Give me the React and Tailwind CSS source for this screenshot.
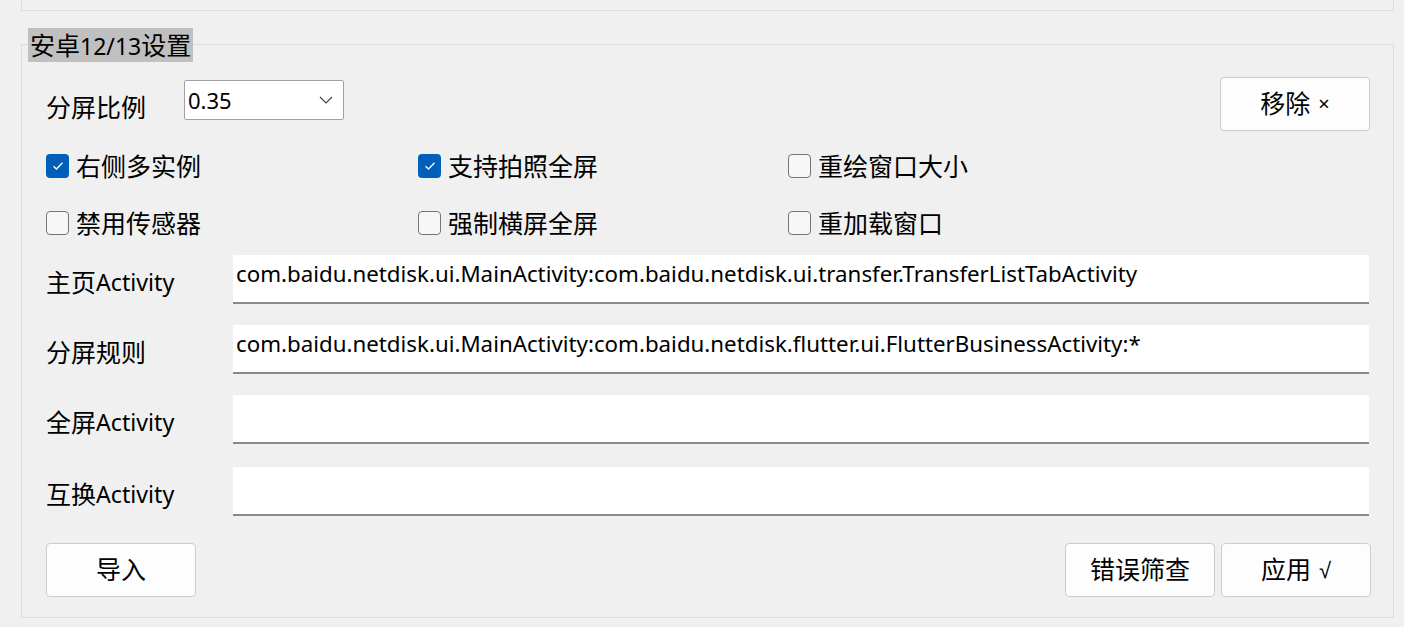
import React from "react";

const F = { fontFamily: '"Noto Sans", "Noto Sans CJK SC", sans-serif' };

function Box({ checked, label }) {
  return (
    <div className="flex items-center h-[30px]">
      {checked ? (
        <div className="w-[23px] h-[24px] rounded-[4px] bg-[#005fb8] flex items-center justify-center">
          <svg width="12" height="10" viewBox="0 0 12 10" fill="none">
            <path d="M1.5 5.2 L4.5 8 L10.5 1.8" stroke="white" strokeWidth="1.3" />
          </svg>
        </div>
      ) : (
        <div className="w-[23px] h-[24px] rounded-[4px] border border-[#767676] bg-[#f7f7f7]" />
      )}
      <span className="ml-[7px] text-[25px] leading-[30px] text-black">{label}</span>
    </div>
  );
}

function Btn({ children, className = "" }) {
  return (
    <div
      className={
        "w-[150px] h-[54px] rounded-[4px] border border-[#cccccc] bg-[#fdfdfd] flex items-center justify-center text-[25px] text-black " +
        className
      }
    >
      {children}
    </div>
  );
}

function Row({ cjk, latin, value, mt }) {
  return (
    <div className={"flex items-stretch h-[49px] " + mt}>
      <div className="w-[187px] flex items-center pt-[4px] leading-[30px] text-black">
        <span className="text-[25px]">{cjk}</span>
        {latin ? <span className="text-[23.2px]">{latin}</span> : null}
      </div>
      <div className="flex-1 bg-white border-b-2 border-[#8a8a8a] pl-[3px] pt-[4px] text-[22.3px] leading-[30px] text-black whitespace-nowrap overflow-hidden">
        {value}
      </div>
    </div>
  );
}

export default function App() {
  return (
    <div className="w-[1404px] h-[627px] bg-[#f0f0f0] overflow-hidden" style={F}>
      <div className="ml-[21px] w-[1373px] h-[11px] border-l border-r border-b border-[#dcdcdc]" />
      <div className="relative ml-[21px] mt-[33px] w-[1373px] h-[574px] border border-[#dcdcdc]">
        <div className="absolute left-[6px] top-[-17px] h-[34px] px-[2px] bg-[#c0c0c0] leading-[34px] text-black whitespace-nowrap">
          <span className="text-[25px]">安卓</span>
          <span className="text-[23px]">12/13</span>
          <span className="text-[25px]">设置</span>
        </div>
        <div className="px-[24px]">
          <div className="flex items-start justify-between mt-[32px] h-[53px]">
            <div className="flex items-start">
              <div className="w-[138px] mt-[15px] text-[25px] leading-[30px] text-black">分屏比例</div>
              <div className="mt-[3px] w-[160px] h-[40px] border border-[#a0a0a0] rounded-[2px] bg-white flex items-center justify-between pl-[3px] pr-[10px]">
                <span className="text-[22px] leading-[30px] text-black">0.35</span>
                <svg width="14" height="8" viewBox="0 0 14 8" fill="none">
                  <path d="M1 1 L7 7 L13 1" stroke="#444" strokeWidth="1.2" />
                </svg>
              </div>
            </div>
            <Btn className="mr-[-1px]">
              移除 <span className="ml-[8px] text-[20px]">×</span>
            </Btn>
          </div>
          <div className="grid grid-cols-[372px_370px_1fr] mt-[21px]">
            <Box checked label="右侧多实例" />
            <Box checked label="支持拍照全屏" />
            <Box label="重绘窗口大小" />
          </div>
          <div className="grid grid-cols-[372px_370px_1fr] mt-[27px]">
            <Box label="禁用传感器" />
            <Box label="强制横屏全屏" />
            <Box label="重加载窗口" />
          </div>
          <Row mt="mt-[17px]" cjk="主页" latin="Activity" value="com.baidu.netdisk.ui.MainActivity:com.baidu.netdisk.ui.transfer.TransferListTabActivity" />
          <Row mt="mt-[21px]" cjk="分屏规则" value="com.baidu.netdisk.ui.MainActivity:com.baidu.netdisk.flutter.ui.FlutterBusinessActivity:*" />
          <Row mt="mt-[21px]" cjk="全屏" latin="Activity" value="" />
          <Row mt="mt-[23px]" cjk="互换" latin="Activity" value="" />
          <div className="flex mt-[27px]">
            <Btn className="ml-[0px]">导入</Btn>
            <div className="flex-1" />
            <Btn>错误筛查</Btn>
            <Btn className="ml-[6px] mr-[-2px]">
              应用 <span className="ml-[8px] text-[22px]" style={{ fontFamily: '"Liberation Sans", sans-serif' }}>√</span>
            </Btn>
          </div>
        </div>
      </div>
    </div>
  );
}
